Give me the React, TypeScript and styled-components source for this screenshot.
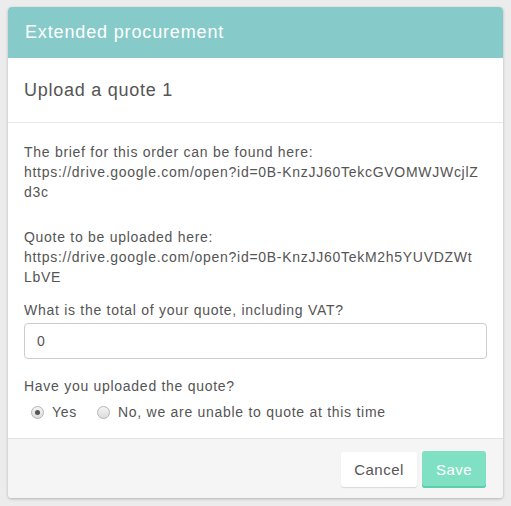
import React from "react";
import styled, { createGlobalStyle } from "styled-components";

const Global = createGlobalStyle`
  html, body { margin: 0; padding: 0; }
  body {
    background: #ececec;
    font-family: "Liberation Sans", Arial, Helvetica, sans-serif;
    color: #555;
  }
`;

const Page = styled.div`
  padding: 7px 8px 8px 8px;
`;

const Panel = styled.div`
  width: 495px;
  background: #fff;
  border-radius: 4px;
  box-shadow: 0 1px 3px rgba(0, 0, 0, 0.25);
  overflow: hidden;
`;

const Header = styled.div`
  height: 51px;
  background: #86cbca;
  display: flex;
  align-items: center;
  padding: 0 17px;
  color: #fff;
  font-size: 18px;
  letter-spacing: 0.85px;
  padding-bottom: 1px;
  box-sizing: border-box;
`;

const SubHeader = styled.div`
  height: 65px;
  display: flex;
  align-items: center;
  padding: 0 16px;
  font-size: 18px;
  letter-spacing: 0.75px;
  color: #555;
  border-bottom: 1px solid #e8e8e8;
  box-sizing: border-box;
`;

const Body = styled.div`
  padding: 19px 16px 16px 16px;
  font-size: 14px;
  line-height: 20px;
  letter-spacing: 0.72px;
`;

const Para = styled.p<{ $gap: number }>`
  margin: 0 0 ${(p) => p.$gap}px 0;
  white-space: nowrap;
`;

const Label = styled.div`
  margin-bottom: 3px;
`;

const Input = styled.div`
  height: 36px;
  box-sizing: border-box;
  border: 1px solid #ccc;
  border-radius: 4px;
  padding: 0 12px;
  display: flex;
  align-items: center;
  font-size: 14px;
  margin-bottom: 17px;
`;

const RadioRow = styled.div`
  display: flex;
  align-items: center;
  margin-top: 6px;
  padding-left: 7px;
  height: 20px;
`;

const RadioItem = styled.label`
  display: flex;
  align-items: center;
  margin-right: 20px;
`;

const RadioDot = styled.span<{ $checked?: boolean }>`
  width: 13px;
  height: 13px;
  box-sizing: border-box;
  border-radius: 50%;
  border: 1px solid #b5b5b5;
  background: linear-gradient(#f4f4f4, #dcdcdc);
  margin-right: 8px;
  display: flex;
  align-items: center;
  justify-content: center;
  &::after {
    content: "";
    width: 5px;
    height: 5px;
    border-radius: 50%;
    background: ${(p) => (p.$checked ? "#555" : "transparent")};
  }
`;

const Footer = styled.div`
  height: 60px;
  box-sizing: border-box;
  background: #f5f5f5;
  border-top: 1px solid #e3e3e3;
  display: flex;
  justify-content: flex-end;
  align-items: flex-start;
  padding: 12px 17px 0 0;
  gap: 5px;
`;

const Button = styled.button<{ $primary?: boolean }>`
  box-sizing: border-box;
  border-radius: 3px;
  font-family: "Liberation Sans", Arial, sans-serif;
  font-size: 15px;
  letter-spacing: 0.5px;
  width: ${(p) => (p.$primary ? 64 : 76)}px;
  padding: 0;
  border: none;
  background: ${(p) => (p.$primary ? "#7fe0c4" : "#fff")};
  color: ${(p) => (p.$primary ? "#fff" : "#555")};
  box-shadow: ${(p) =>
    p.$primary ? "inset 0 -2px 0 #5ccfaa" : "0 1px 1px rgba(0,0,0,0.12)"};
  margin-top: ${(p) => (p.$primary ? 0 : 1)}px;
  height: ${(p) => (p.$primary ? 37 : 35)}px;
`;

export default function App() {
  return (
    <Page>
      <Global />
      <Panel>
        <Header>Extended procurement</Header>
        <SubHeader>Upload a quote 1</SubHeader>
        <Body>
          <Para $gap={25}>
            The brief for this order can be found here:
            <br />
            https://drive.google.com/open?id=0B-KnzJJ60TekcGVOMWJWcjlZ
            <br />
            d3c
          </Para>
          <Para $gap={13}>
            Quote to be uploaded here:
            <br />
            https://drive.google.com/open?id=0B-KnzJJ60TekM2h5YUVDZWt
            <br />
            LbVE
          </Para>
          <Label>What is the total of your quote, including VAT?</Label>
          <Input>0</Input>
          <div>Have you uploaded the quote?</div>
          <RadioRow>
            <RadioItem>
              <RadioDot $checked />
              Yes
            </RadioItem>
            <RadioItem>
              <RadioDot />
              No, we are unable to quote at this time
            </RadioItem>
          </RadioRow>
        </Body>
        <Footer>
          <Button>Cancel</Button>
          <Button $primary>Save</Button>
        </Footer>
      </Panel>
    </Page>
  );
}
